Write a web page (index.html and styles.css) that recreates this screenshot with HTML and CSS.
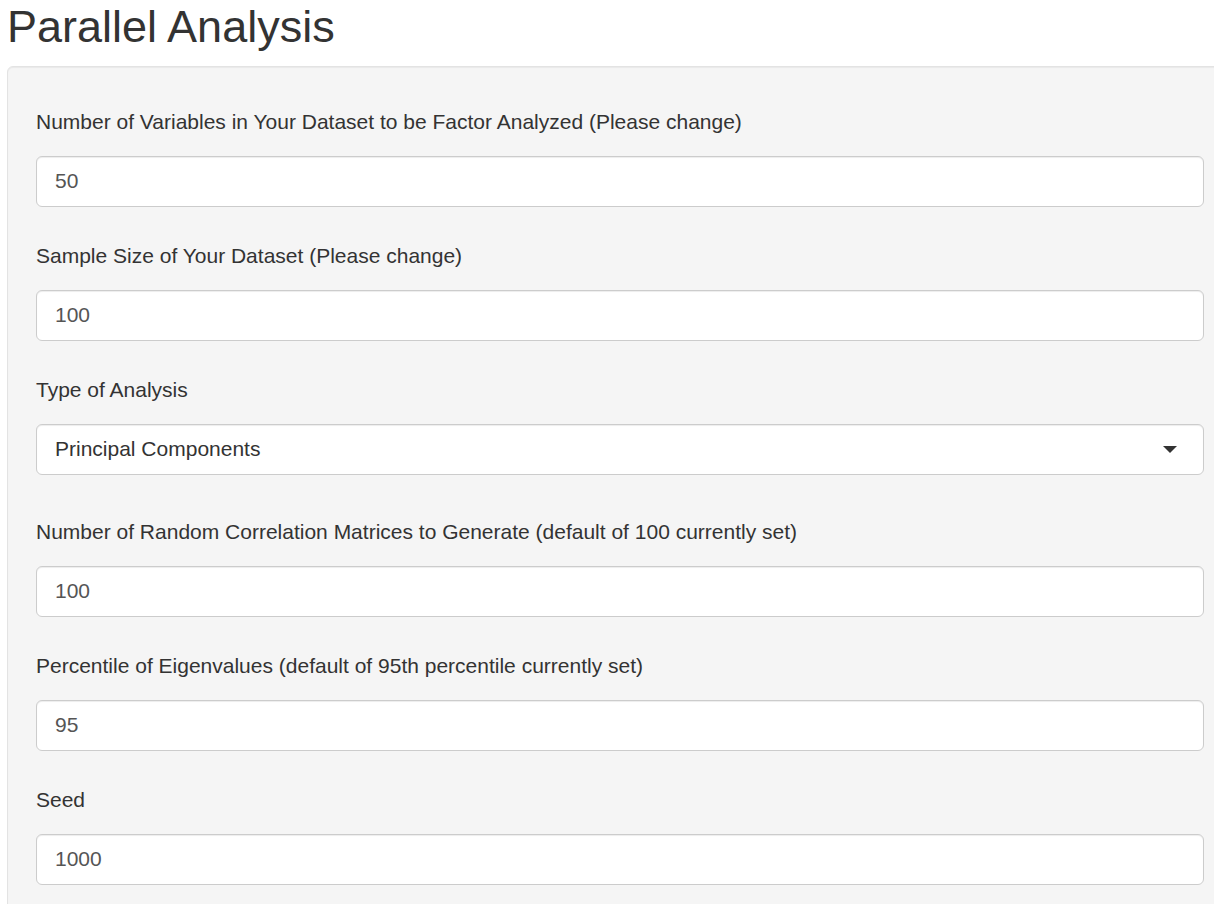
FILE: index.html
```html
<!DOCTYPE html>
<html lang="en">

<head>
    <meta charset="UTF-8">
    <title>Parallel Analysis</title>
    <link rel="stylesheet" href="styles.css">
</head>

<body>
    <div class="page">
        <h2 class="title">Parallel Analysis</h2>

        <div class="well">
            <div class="form-group">
                <label for="nvars">Number of Variables in Your Dataset to be Factor Analyzed (Please change)</label>
                <input type="text" id="nvars" class="form-control" value="50">
            </div>
            <div class="form-group">
                <label for="nobs">Sample Size of Your Dataset (Please change)</label>
                <input type="text" id="nobs" class="form-control" value="100">
            </div>
            <div class="form-group form-group-select">
                <label>Type of Analysis</label>
                <div class="select-box">
                    <span>Principal Components</span>
                    <span class="caret"></span>
                </div>
            </div>
            <div class="form-group">
                <label for="reps">Number of Random Correlation Matrices to Generate (default of 100 currently set)</label>
                <input type="text" id="reps" class="form-control" value="100">
            </div>
            <div class="form-group">
                <label for="pct">Percentile of Eigenvalues (default of 95th percentile currently set)</label>
                <input type="text" id="pct" class="form-control" value="95">
            </div>
            <div class="form-group">
                <label for="seed">Seed</label>
                <input type="text" id="seed" class="form-control" value="1000">
            </div>
        </div>
    </div>
</body>

</html>
```

FILE: styles.css
```css
html,
body {
    margin: 0;
    padding: 0;
    background: #fff;
}

body {
    font-family: "Liberation Sans", Arial, sans-serif;
    color: #333;
}

.page {
    padding-left: 7px;
    overflow: hidden;
    height: 904px;
}

.title {
    font-size: 45px;
    font-weight: normal;
    line-height: 54px;
    margin: 0 0 12px 0;
    color: #333;
}

.well {
    background: #f5f5f5;
    border: 1px solid #e3e3e3;
    border-radius: 6px;
    box-shadow: inset 0 1px 1px rgba(0, 0, 0, 0.05);
    padding: 39px 28px 28px 28px;
    margin-right: -20px;
}

.form-group {
    margin-bottom: 33px;
}

.form-group-select {
    margin-bottom: 41px;
}

.form-group label {
    display: block;
    font-size: 21px;
    line-height: 30px;
    padding-top: 1px;
    margin-bottom: 19px;
    color: #333;
}

.form-control {
    display: block;
    box-sizing: border-box;
    width: 1168px;
    height: 51px;
    padding: 0 18px 2px 18px;
    font-family: inherit;
    font-size: 21px;
    color: #555;
    background: #fff;
    border: 1px solid #ccc;
    border-radius: 6px;
    box-shadow: inset 0 1px 1px rgba(0, 0, 0, 0.075);
    outline: none;
}

.select-box {
    display: flex;
    align-items: center;
    justify-content: space-between;
    box-sizing: border-box;
    width: 1168px;
    height: 51px;
    padding: 0 26px 2px 18px;
    font-size: 21px;
    color: #333;
    background: #fff;
    border: 1px solid #ccc;
    border-radius: 6px;
    box-shadow: inset 0 1px 1px rgba(0, 0, 0, 0.075);
}

.caret {
    width: 0;
    height: 0;
    margin-top: 2px;
    border-left: 7px solid transparent;
    border-right: 7px solid transparent;
    border-top: 7px solid #333;
}
```
